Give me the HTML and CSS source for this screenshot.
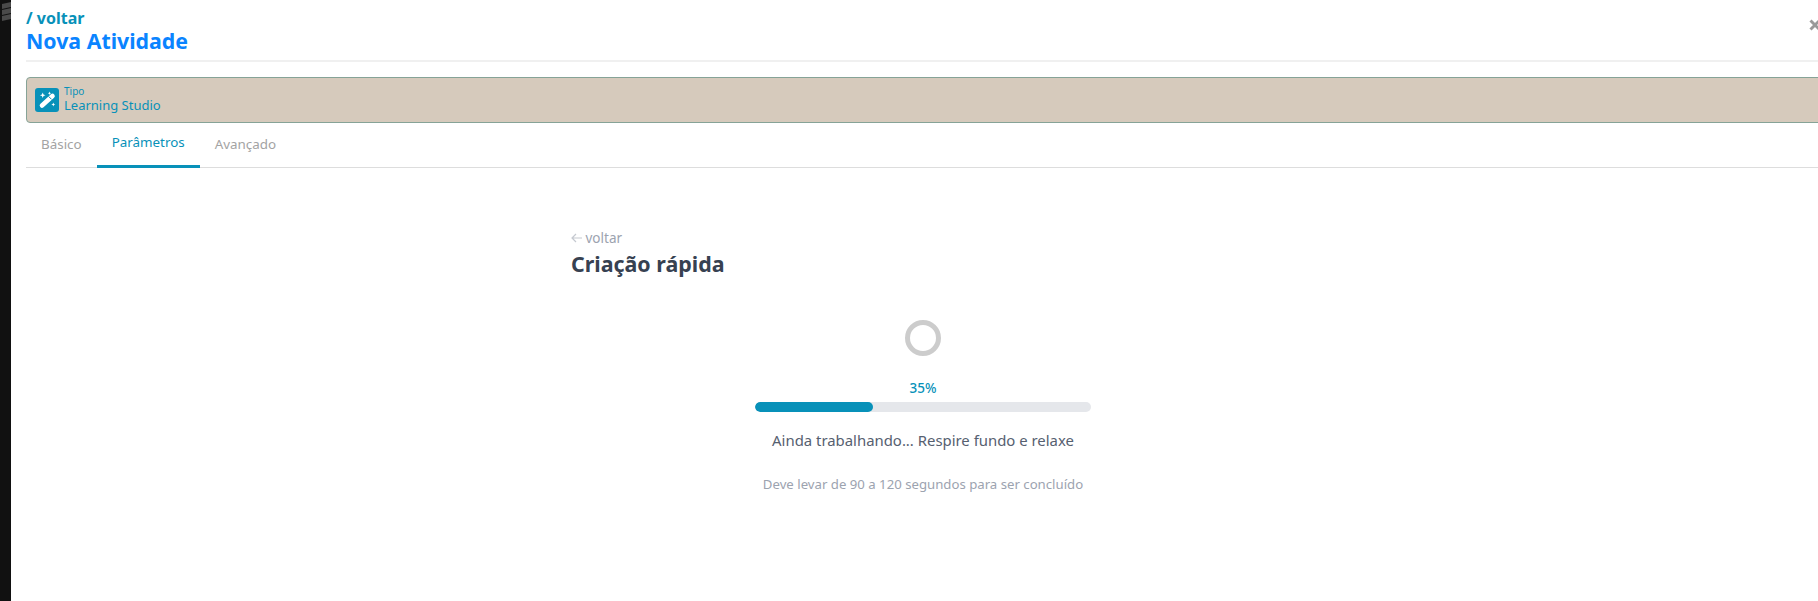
FILE: index.html
```html
<!DOCTYPE html>
<html lang="pt">

<head>
    <meta charset="utf-8">
    <title>Nova Atividade</title>
    <link rel="stylesheet" href="styles.css">
</head>

<body>
    <aside class="lateral">
        <div class="marca">
            <span></span>
            <span></span>
            <span></span>
        </div>
    </aside>

    <main class="painel">
        <header class="topo">
            <a class="voltar-topo">/ voltar</a>
            <h1>Nova Atividade</h1>
            <svg class="fechar" width="12" height="12" viewBox="0 0 12 12">
                <path d="M1.500 1.500l9 9M10.500 1.500l-9 9" stroke="#999" stroke-width="3" fill="none"/>
            </svg>
        </header>

        <section class="tipo">
            <div class="tipo-icone">
                <svg width="24" height="24" viewBox="0 0 24 24">
                    <path d="M7 17.500L17.500 8" stroke="#fff" stroke-width="4.600" stroke-linecap="round" fill="none"/>
                    <path d="M13.600 8.400l3 3" stroke="#0891b9" stroke-width="1" fill="none"/>
                    <path d="M7.700 4.500l.8 2 2 .8-2 .8-.8 2-.8-2-2-.8 2-.8zM14.500 3.500l.5 1.200 1.200.5-1.200.5-.5 1.200-.5-1.200-1.200-.5 1.200-.5zM18.300 14.500l.6 1.400 1.400.6-1.400.6-.6 1.400-.6-1.400-1.400-.6 1.400-.6z" fill="#fff"/>
                </svg>
            </div>
            <div class="tipo-texto">
                <span class="tipo-rotulo">Tipo</span>
                <span class="tipo-nome">Learning Studio</span>
            </div>
        </section>

        <nav class="abas">
            <button>Básico</button>
            <button class="valgt">Parâmetros</button>
            <button>Avançado</button>
        </nav>

        <section class="conteudo">
            <a class="voltar">
                <svg width="11" height="10" viewBox="0 0 11 10">
                    <path d="M5 1L1 5l4 4M1 5h10" stroke="#c5c9d0" stroke-width="1.200" fill="none"/>
                </svg>
                voltar
            </a>
            <h2>Criação rápida</h2>

            <div class="progresso">
                <div class="spinner"></div>
                <p class="porcento">35%</p>
                <div class="barra">
                    <div class="barra-fill" style="width: 35%"></div>
                </div>
                <p class="mensagem">Ainda trabalhando... Respire fundo e relaxe</p>
                <p class="aviso">Deve levar de 90 a 120 segundos para ser concluído</p>
            </div>
        </section>
    </main>
</body>

</html>
```

FILE: styles.css
```css
* {
    box-sizing: border-box;
}

html,
body {
    height: 100%;
    margin: 0;
    overflow: hidden;
}

body {
    display: flex;
    background-color: #fff;
    font-family: "Noto Sans", sans-serif;
}

.lateral {
    width: 11px;
    flex-shrink: 0;
    overflow: hidden;
    background-color: #111;
    padding: 3px 0 0 2px;
}

.marca {
    transform: skewY(-14deg);
}

.marca span {
    display: block;
    height: 5px;
    margin-bottom: 1px;
    background-color: #4a4a4a;
}

.painel {
    flex: 1;
    min-width: 0;
    padding-left: 15px;
    margin-right: -40px;
}

.topo {
    position: relative;
    height: 62px;
    padding-top: 8px;
    border-bottom: 2px solid #f0f0f0;
}

.voltar-topo {
    display: block;
    color: #0891b9;
    font-size: 16px;
    font-weight: 700;
    line-height: 20px;
}

h1 {
    margin: 1px 0 0;
    color: #0a84ff;
    font-size: 21.300px;
    font-weight: 700;
    line-height: 24px;
}

.fechar {
    position: absolute;
    top: 19px;
    right: 37px;
}

.tipo {
    display: flex;
    align-items: center;
    gap: 5px;
    height: 46px;
    margin-top: 15px;
    padding-left: 8px;
    background-color: #d6cabc;
    border: 1px solid #86a397;
    border-radius: 4px;
}

.tipo-icone {
    width: 24px;
    height: 24px;
    background-color: #0891b9;
    border-radius: 3px;
}

.tipo-icone svg {
    display: block;
}

.tipo-texto {
    display: flex;
    flex-direction: column;
    padding-bottom: 2px;
    color: #0891b9;
}

.tipo-rotulo {
    font-size: 10px;
    line-height: 12px;
}

.tipo-nome {
    font-size: 13px;
    line-height: 17px;
}

.abas {
    display: flex;
    height: 45px;
    border-bottom: 1px solid #ddd;
}

.abas button {
    height: 45px;
    padding: 0 15px 4px;
    background: none;
    border: none;
    color: #a3a3a3;
    font-family: "Noto Sans", sans-serif;
    font-size: 13.400px;
}

.abas .valgt {
    color: #0891b9;
    border-bottom: 3px solid #0891b9;
}

.conteudo {
    width: 1000px;
    padding: 61px 0 0 545px;
}

.voltar {
    display: block;
    color: #9ca3af;
    font-size: 13.500px;
    line-height: 18px;
}

h2 {
    margin: 3px 0 0;
    color: #374151;
    font-size: 21.400px;
    font-weight: 700;
    line-height: 28px;
}

.progresso {
    display: flex;
    flex-direction: column;
    align-items: center;
    width: 336px;
    margin: 42px 0 0 184px;
}

.spinner {
    width: 36px;
    height: 36px;
    border: 5px solid #ccc;
    border-radius: 50%;
}

.porcento {
    margin: 23px 0 0;
    color: #0891b9;
    font-size: 13.500px;
    font-weight: 500;
    line-height: 18px;
}

.barra {
    width: 336px;
    height: 10px;
    margin-top: 5px;
    overflow: hidden;
    background-color: #e5e7eb;
    border-radius: 5px;
}

.barra-fill {
    height: 100%;
    background-color: #0891b9;
    border-radius: 5px;
}

.mensagem {
    margin: 17px 0 0;
    color: #566070;
    font-size: 14.900px;
    line-height: 22px;
    white-space: nowrap;
}

.aviso {
    margin: 24px 0 0;
    color: #9ca3af;
    font-size: 13.200px;
    line-height: 18px;
    white-space: nowrap;
}
```
